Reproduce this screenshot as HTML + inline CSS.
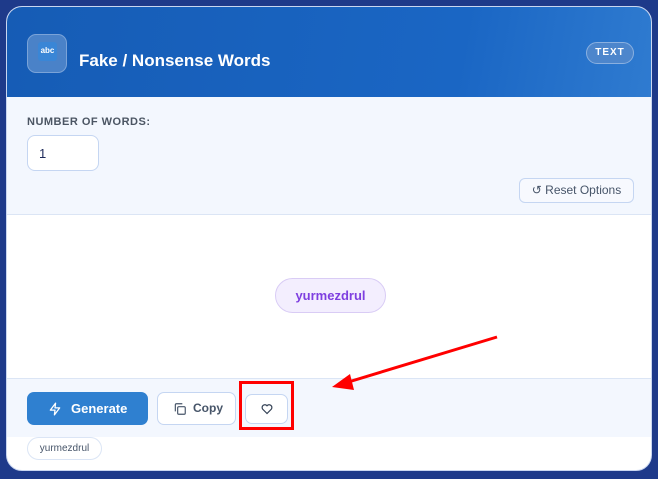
<!DOCTYPE html>
<html><head><meta charset="utf-8"><style>
*{box-sizing:border-box;margin:0;padding:0}
body{width:658px;height:479px;background:#1e3a8a;font-family:"Liberation Sans",sans-serif;position:relative;overflow:hidden}
.card{position:absolute;left:6px;top:6px;width:646px;height:465px;background:#fff;border-radius:16px;overflow:hidden;border:1px solid #c9d6f0}
.hdr{position:absolute;left:0;top:0;width:100%;height:90px;background:linear-gradient(100deg,#165cb5 0%,#1a66c4 70%,#2f7bd0 100%)}
.ic{position:absolute;left:20px;top:27px;width:40px;height:39px;border-radius:9px;background:#4a82c8;border:1px solid #7aa3d8}
.ic span{position:absolute;left:10px;top:7px;width:19px;height:19px;background:#3a86d6;border-radius:3px;color:#fff;font-size:8px;font-weight:bold;text-align:center;line-height:17px}
.title{position:absolute;left:72px;top:44px;color:#fff;font-size:17px;font-weight:bold}
.badge{position:absolute;left:579px;top:35px;width:48px;height:22px;border-radius:11px;background:#4d86cc;border:1px solid #8ab0e0;color:#fff;font-size:10px;font-weight:bold;text-align:center;line-height:20px;letter-spacing:1px}
.opt{position:absolute;left:0;top:90px;width:100%;height:118px;background:#f3f7fe;border-bottom:1px solid #dbe5f5}
.lbl{position:absolute;left:20px;top:19px;font-size:11px;font-weight:bold;color:#4b5563;letter-spacing:.5px}
.inp{position:absolute;left:20px;top:38px;width:72px;height:36px;background:#fff;border:1px solid #c5d6f2;border-radius:8px;font-size:13px;color:#1e2a5a;padding:10px 11px}
.reset{position:absolute;left:512px;top:81px;width:115px;height:25px;border:1px solid #c5d6f2;border-radius:6px;background:#f7f9fe;font-size:12px;color:#475569;text-align:center;line-height:23px}
.pill{position:absolute;left:268px;top:271px;width:111px;height:35px;border-radius:18px;background:#f3eefe;border:1px solid #d9ccf5;color:#7e3fe0;font-size:13px;font-weight:bold;text-align:center;line-height:33px}
.bar{position:absolute;left:0;top:371px;width:100%;height:59px;background:#f3f7fe;border-top:1px solid #dbe5f5}
.gen{position:absolute;left:20px;top:13px;width:121px;height:33px;background:#2f80d0;border-radius:7px;color:#fff;font-size:13px;font-weight:bold;line-height:33px;padding-left:44px}
.copy{position:absolute;left:150px;top:13px;width:79px;height:33px;background:#fff;border:1px solid #c5d6f2;border-radius:7px;color:#475569;font-size:12px;font-weight:bold;line-height:31px;padding-left:35px}
.fav{position:absolute;left:238px;top:15px;width:43px;height:30px;background:#fff;border:1px solid #c5d6f2;border-radius:7px}
.hist{position:absolute;left:20px;top:436px;width:75px;height:23px;border:1px solid #dbe5f5;border-radius:12px;font-size:10px;color:#475569;text-align:center;line-height:21px;background:#fff}
</style></head><body>
<div class="card">
<div class="hdr"><div class="ic"><span>abc</span></div><div class="title">Fake / Nonsense Words</div><div class="badge">TEXT</div></div>
<div class="opt"><div class="lbl">NUMBER OF WORDS:</div><div class="inp">1</div><div class="reset">↺ Reset Options</div></div>
<div class="pill">yurmezdrul</div>
<div class="bar">
<div class="gen"><svg style="position:absolute;left:21px;top:10px" width="14" height="14" viewBox="0 0 24 24" fill="none" stroke="#fff" stroke-width="2.2" stroke-linejoin="round"><path d="M13 2L4 14h8l-1 8 9-12h-8z"/></svg>Generate</div>
<div class="copy"><svg style="position:absolute;left:15px;top:9px" width="14" height="14" viewBox="0 0 24 24" fill="none" stroke="#475569" stroke-width="2"><rect x="8" y="8" width="13" height="13" rx="2"/><path d="M4 16V5a2 2 0 0 1 2-2h10"/></svg>Copy</div>
<div class="fav"><svg style="position:absolute;left:15px;top:8px" width="12" height="12" viewBox="0 0 24 24" fill="none" stroke="#334155" stroke-width="2.4"><path d="M12 21l-8.5-8.5a5 5 0 0 1 8.5-7 5 5 0 0 1 8.5 7z"/></svg></div>
</div>
<div class="hist" style="top:430px;left:20px">yurmezdrul</div>
</div>
<div style="position:absolute;left:239px;top:381px;width:55px;height:49px;border:3px solid #f00"></div>
<svg style="position:absolute;left:0;top:0" width="658" height="479"><line x1="497" y1="337" x2="345" y2="383" stroke="#f00" stroke-width="3"/><polygon points="332,387 350,374 354,390" fill="#f00"/></svg>
</body></html>
